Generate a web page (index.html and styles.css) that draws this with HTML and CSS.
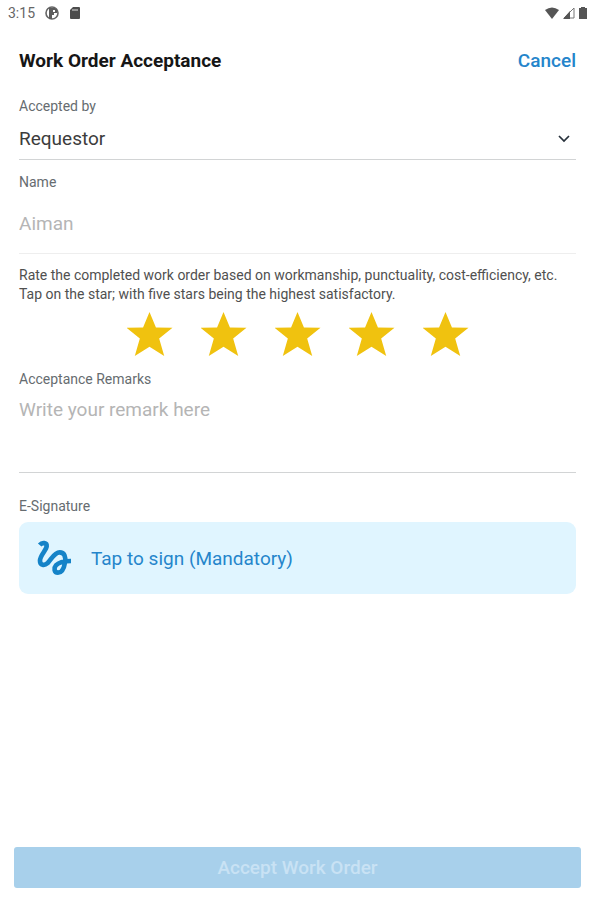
FILE: index.html
```html
<!DOCTYPE html>
<html lang="en">
<head>
    <meta charset="UTF-8">
    <meta name="viewport" content="width=device-width, initial-scale=1.0">
    <title>Work Order Acceptance</title>
    <link rel="stylesheet" href="styles.css">
</head>
<body>
    <div class="status-bar">
        <span class="time">3:15</span>
        <svg class="status-icon" width="14" height="14" viewBox="0 0 14 14">
            <circle cx="7" cy="7" r="6" fill="#fff" stroke="#666" stroke-width="1.6"/>
            <path d="M4 2h6v1h2v4H9v2H7v4H4z" fill="#5c5c5c"/>
            <path d="M8 4h2v2H8z" fill="#fff"/>
        </svg>
        <svg class="status-icon" width="12" height="14" viewBox="0 0 12 14">
            <path d="M4 1h6q1 0 1 1v10q0 1-1 1H2q-1 0-1-1V4z" fill="#4c4c4c"/>
            <path d="M4 3v2M6 3v2M8 3v2" stroke="#ddd" stroke-width="1"/>
        </svg>
        <div class="status-right">
            <svg width="16" height="14" viewBox="0 0 16 14">
                <path d="M1 4Q8-1 15 4L8 13z" fill="#555"/>
            </svg>
            <svg width="14" height="14" viewBox="0 0 14 14">
                <path d="M12 2v10H2z" fill="#fff" stroke="#777"/>
                <path d="M8 5v8H1z" fill="#555"/>
            </svg>
            <svg width="10" height="14" viewBox="0 0 10 14">
                <path d="M3 1h4v1h2v11H1V2h2z" fill="#555"/>
            </svg>
        </div>
    </div>

    <form class="order-form">
        <div class="header">
            <h1>Work Order Acceptance</h1>
            <a class="cancel" href="#">Cancel</a>
        </div>

        <label for="acceptedBy">Accepted by</label>
        <div class="select-wrap">
            <select id="acceptedBy" name="accepted_by">
                <option>Requestor</option>
            </select>
            <svg class="chevron" width="12" height="8" viewBox="0 0 12 8">
                <path d="M1 1l5 5 5-5" fill="none" stroke="#27313b" stroke-width="1.7"/>
            </svg>
        </div>

        <label class="name-label" for="name">Name</label>
        <input type="text" id="name" name="name" placeholder="Aiman">

        <p class="hint" id="rateHint">Rate the completed work order based on workmanship, punctuality, cost-efficiency, etc. Tap on the star; with five stars being the highest satisfactory.</p>
        <div class="stars" role="radiogroup" aria-labelledby="rateHint">
            <input type="radio" name="rating" value="1" aria-label="1 star">
            <input type="radio" name="rating" value="2" aria-label="2 stars">
            <input type="radio" name="rating" value="3" aria-label="3 stars">
            <input type="radio" name="rating" value="4" aria-label="4 stars">
            <input type="radio" name="rating" value="5" aria-label="5 stars" checked>
        </div>

        <label class="remarks-label" for="remarks">Acceptance Remarks</label>
        <textarea id="remarks" name="remarks" placeholder="Write your remark here"></textarea>

        <label class="sign-label" for="sign">E-Signature</label>
        <button type="button" class="sign" id="sign">
            <svg width="36" height="36" viewBox="36 30 108 108">
                <path d="M44 45C52 36 66 38 65 49C64 61 45 76 45 92C45 106 58 108 68 99C79 88 88 67 104 67C118 67 123 80 120 97C117 116 111 128 99 128C87 128 86 114 93 106C101 97 120 93 138 93" fill="none" stroke="#1583c8" stroke-width="14"/>
            </svg>
            <span>Tap to sign (Mandatory)</span>
        </button>

        <button type="submit" class="accept" disabled>Accept Work Order</button>
    </form>
</body>
</html>
```

FILE: styles.css
```css
* {
    box-sizing: border-box;
}
body {
    font-family: Roboto, Arial, sans-serif;
    margin: 0;
    min-height: 100vh;
    display: flex;
    flex-direction: column;
    background: #fff;
    color: #333;
}
input, select, textarea, button {
    font-family: inherit;
    font-size: 19px;
    border: none;
    border-radius: 0;
    padding: 0;
    margin: 0;
    background: none;
}
.status-bar {
    display: flex;
    align-items: center;
    height: 26px;
    padding: 0 6px 0 8px;
    font-size: 14px;
    color: #666;
}
.status-icon {
    margin-left: 10px;
}
.status-right {
    display: flex;
    gap: 2px;
    margin-left: auto;
}
.order-form {
    flex: 1;
    display: flex;
    flex-direction: column;
    padding: 0 18px 12px 19px;
}
.header {
    display: flex;
    justify-content: space-between;
    align-items: center;
    height: 69px;
    margin-bottom: 3px;
}
h1 {
    margin: 0;
    font-size: 19px;
    font-weight: bold;
    color: #161616;
}
.cancel {
    font-size: 19px;
    font-weight: 500;
    color: #2585cb;
    text-decoration: none;
}
label {
    font-size: 14px;
    line-height: 16px;
    color: #666c70;
}
.select-wrap {
    display: flex;
    align-items: center;
    height: 42px;
    margin-top: 4px;
    padding-right: 6px;
    border-bottom: 1px solid #d2d4d5;
}
select {
    flex: 1;
    height: 40px;
    appearance: none;
    color: #3c3c3c;
}
.chevron {
    pointer-events: none;
}
.name-label {
    margin-top: 14px;
}
input[type="text"] {
    height: 61px;
    margin-top: 3px;
    border-bottom: 1px solid #eee;
}
::placeholder {
    color: #b5b5b5;
    opacity: 1;
}
.hint {
    margin: 12px 0 8px;
    font-size: 14px;
    line-height: 19px;
    color: #505050;
}
.stars {
    display: flex;
    justify-content: center;
    gap: 28px;
}
.stars input {
    appearance: none;
    width: 46px;
    height: 44px;
    background: #f0c20f;
    clip-path: polygon(50% 0, 64% 35%, 100% 36%, 71% 60%, 82% 100%, 50% 79%, 18% 100%, 29% 60%, 0 36%, 36% 35%);
    cursor: pointer;
}
.remarks-label {
    margin-top: 15px;
}
textarea {
    height: 74px;
    margin-top: 12px;
    line-height: 22px;
    border-bottom: 1px solid #d2d4d5;
    resize: none;
}
.sign-label {
    margin-top: 25px;
}
.sign {
    display: flex;
    align-items: center;
    gap: 18px;
    height: 72px;
    margin-top: 8px;
    padding: 0 18px;
    border-radius: 9px;
    background: #e0f5ff;
    color: #2585cb;
    cursor: pointer;
}
.accept {
    height: 41px;
    margin: auto -5px 0;
    border-radius: 3px;
    background: #a8d0eb;
    color: #c9e2f4;
    font-weight: 500;
}
```
